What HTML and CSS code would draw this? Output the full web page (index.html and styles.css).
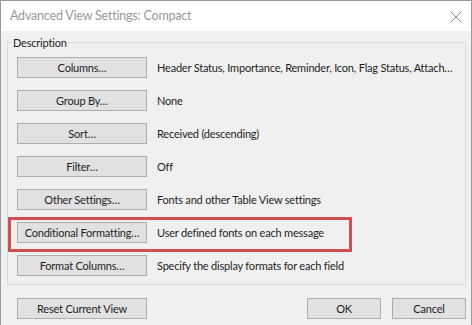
FILE: index.html
```html
<!DOCTYPE html>
<html lang="en">
<head>
  <meta charset="UTF-8">
  <title>Advanced View Settings: Compact</title>
  <link rel="stylesheet" href="styles.css">
</head>
<body>
  <div class="window">
    <div class="titlebar">
      <span class="title">Advanced View Settings: Compact</span>
      <svg class="close" width="12" height="12" viewBox="0 0 12 12">
        <path d="M0.5 0.5 L11.5 11.5 M11.5 0.5 L0.5 11.5" stroke="#8a8a8a" stroke-width="1" fill="none"/>
      </svg>
    </div>
    <div class="content">
      <fieldset class="group">
        <legend>Description</legend>
        <div class="row">
          <button>Columns…</button>
          <span class="desc">Header Status, Importance, Reminder, Icon, Flag Status, Attach…</span>
        </div>
        <div class="row">
          <button>Group By…</button>
          <span class="desc">None</span>
        </div>
        <div class="row">
          <button>Sort…</button>
          <span class="desc">Received (descending)</span>
        </div>
        <div class="row">
          <button>Filter…</button>
          <span class="desc">Off</span>
        </div>
        <div class="row">
          <button>Other Settings…</button>
          <span class="desc">Fonts and other Table View settings</span>
        </div>
        <div class="row marked">
          <button>Conditional Formatting…</button>
          <span class="desc">User defined fonts on each message</span>
          <span class="highlight"></span>
        </div>
        <div class="row">
          <button>Format Columns…</button>
          <span class="desc">Specify the display formats for each field</span>
        </div>
      </fieldset>
      <div class="footer">
        <button>Reset Current View</button>
        <div class="actions">
          <button class="small">OK</button>
          <button class="small">Cancel</button>
        </div>
      </div>
    </div>
  </div>
</body>
</html>
```
FILE: styles.css
```css
body {
  margin: 0;
  background: #f0f0f0;
  font-family: Lato, "Noto Sans", sans-serif;
  font-size: 11px;
  letter-spacing: -0.2px;
  color: #1e1e1e;
}
.window {
  width: 470px;
  height: 324px;
  border: 1px solid #9a9a9a;
  border-bottom: none;
  background: #f0f0f0;
  overflow: hidden;
}
.titlebar {
  height: 30px;
  background: #fff;
  display: flex;
  align-items: center;
  justify-content: space-between;
  padding: 0 9px 0 9px;
}
.title {
  color: #999;
  font-size: 12.5px;
  letter-spacing: -0.2px;
  margin-top: -1px;
}
.close {
  margin-top: 1px;
}
.content {
  padding: 5px 5px 0 6px;
}
.group {
  margin: 0;
  padding: 8px 9px 8px 9px;
  border: 1px solid #dcdcdc;
  min-width: 0;
}
.group legend {
  padding: 0 1px;
  margin-left: -5px;
  color: #1e1e1e;
}
.row {
  display: flex;
  align-items: center;
  height: 21px;
  margin-bottom: 12px;
  position: relative;
}
.row:last-child {
  margin-bottom: 0;
}
button {
  font-family: inherit;
  font-size: 11px;
  letter-spacing: -0.2px;
  color: #1e1e1e;
  background: #e1e1e1;
  border: 1px solid #adadad;
  height: 21px;
  width: 130px;
  padding: 0;
  flex-shrink: 0;
  white-space: nowrap;
}
.desc {
  margin-left: 10px;
  white-space: nowrap;
}
.highlight {
  position: absolute;
  left: -9px;
  top: -5px;
  width: 338px;
  height: 29px;
  border: 3px solid #cd4f4f;
}
.footer {
  display: flex;
  justify-content: space-between;
  margin-top: 13px;
  padding-left: 10px;
}
.actions {
  display: flex;
  gap: 11px;
}
button.small {
  width: 74px;
}
```
